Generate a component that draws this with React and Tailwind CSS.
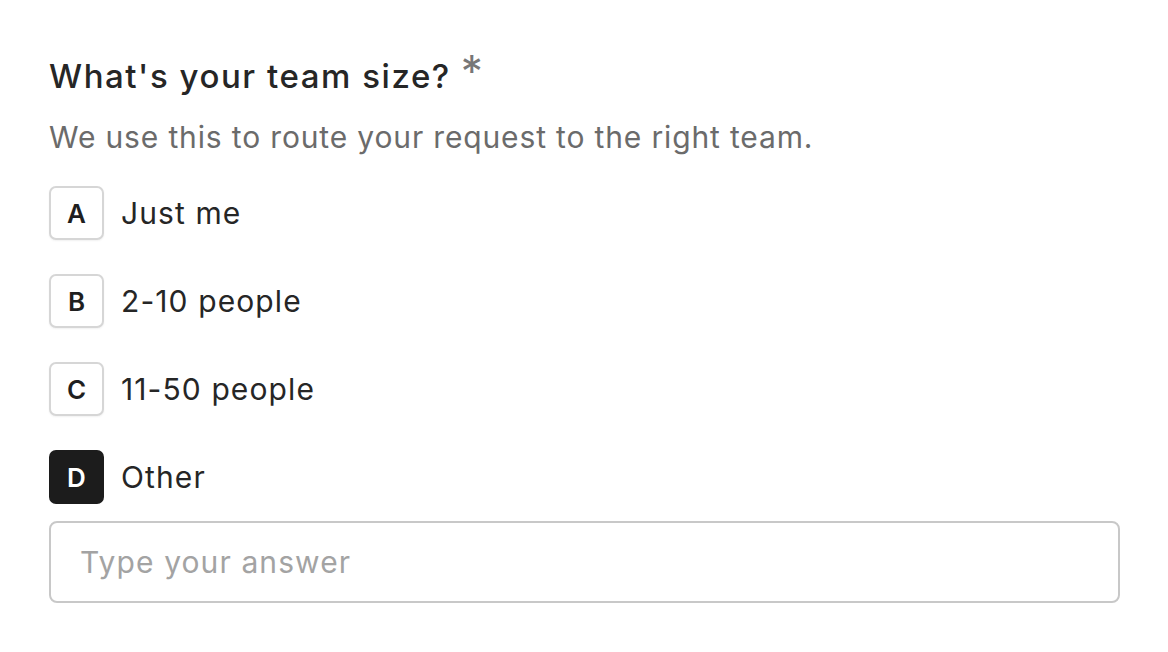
import * as React from 'react';

const options = [
  { key: 'A', label: 'Just me' },
  { key: 'B', label: '2-10 people' },
  { key: 'C', label: '11-50 people' },
  { key: 'D', label: 'Other', selected: true },
];

/**
 * Letter badge + label row
 */
function Choice({ letter, label, selected }) {
  return (
    <div className="flex items-center gap-[17px]">
      <div
        className={
          selected
            ? 'flex h-[54px] w-[55px] items-center justify-center rounded-[7px] bg-[#1c1c1c] text-[26px] font-semibold text-white'
            : 'flex h-[54px] w-[55px] items-center justify-center rounded-[7px] border-2 border-[#d6d6d6] bg-white text-[26px] font-semibold text-[#1f1f1f] shadow-[0_1px_2px_rgba(0,0,0,0.06)]'
        }
      >
        {letter}
      </div>
      <span className="text-[30px] tracking-[1.1px] text-[#262626]">{label}</span>
    </div>
  );
}

export default function App() {
  return (
    <div
      className="min-h-[652px] w-full bg-white px-[49px] pt-[51px]"
      style={{ fontFamily: 'Inter, "Noto Sans", sans-serif' }}
    >
      {/* Question */}
      <h1 className="flex items-start text-[33px] font-medium leading-[50px] tracking-[1.55px] text-[#262626]">
        What's your team size?
        <span className="ml-[10px] mt-[-7px] text-[44px] font-normal leading-[54px] text-[#777777]">*</span>
      </h1>
      <p className="mt-[16px] text-[30px] leading-[40px] tracking-[0.85px] text-[#6b6b6b]">
        We use this to route your request to the right team.
      </p>

      {/* Choices */}
      <div className="mt-[29px] flex flex-col gap-[34px]">
        {options.map((o) => (
          <Choice key={o.key} letter={o.key} label={o.label} selected={o.selected} />
        ))}
      </div>

      {/* Free text */}
      <div className="mt-[17px] flex h-[82px] w-[1071px] items-center rounded-[8px] border-2 border-[#c8c8c8] px-[29px]">
        <input
          className="w-full bg-transparent text-[30px] tracking-[1.1px] text-[#262626] outline-none placeholder:text-[#a3a3a3]"
          placeholder="Type your answer"
        />
      </div>
    </div>
  );
}
